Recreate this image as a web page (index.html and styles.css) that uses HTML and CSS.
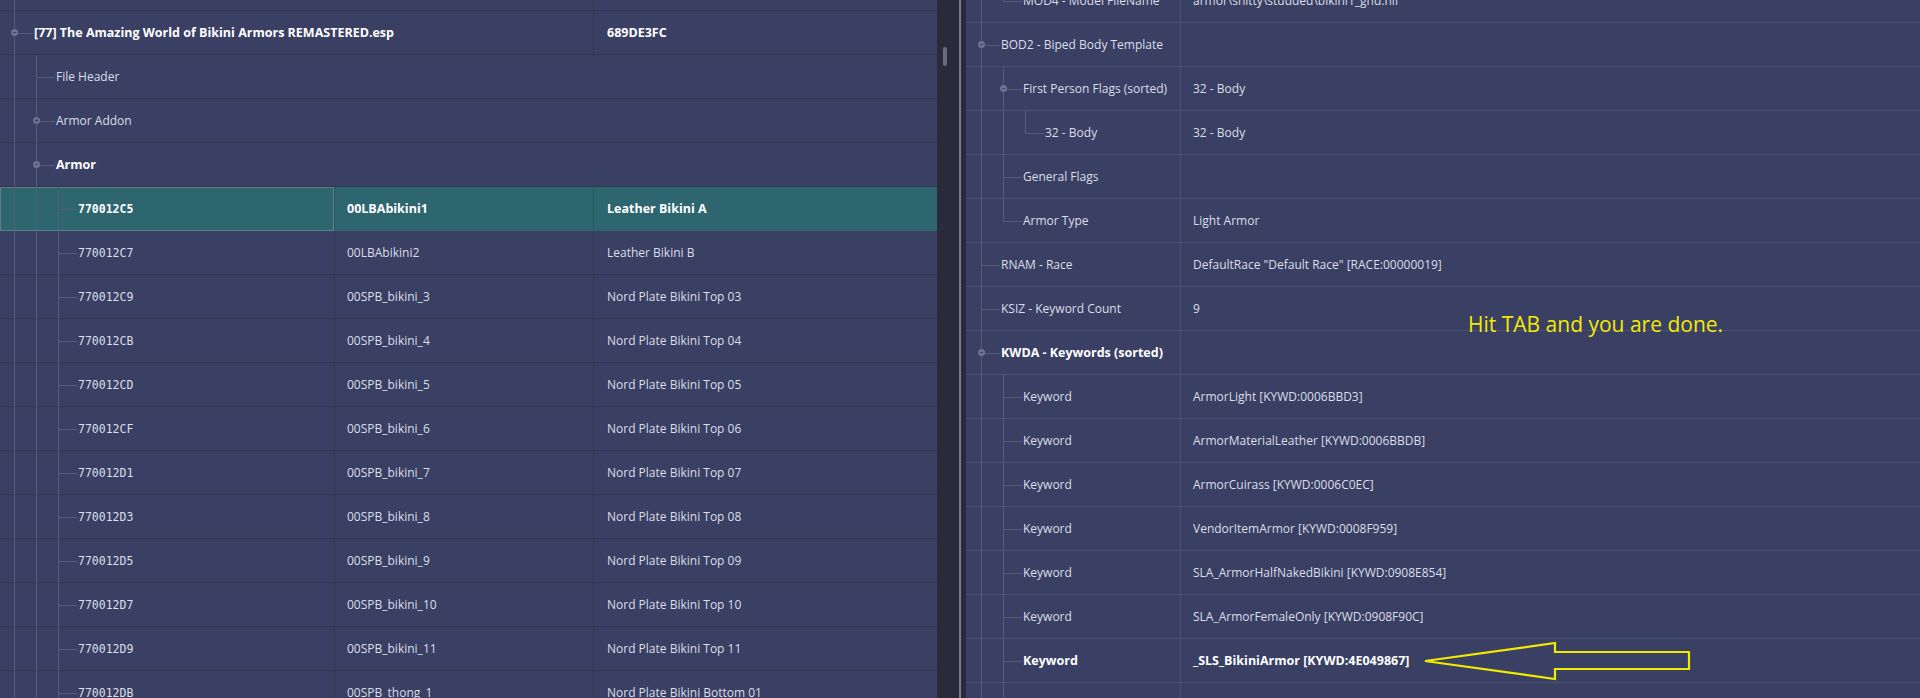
FILE: index.html
```html
<!DOCTYPE html>
<html lang="en">
<head>
  <meta charset="UTF-8">
  <title>xEdit - Bikini Armors</title>
  <link rel="stylesheet" href="styles.css">
</head>
<body>
  <div class="app">

    <!-- record list -->
    <div class="pane left">
      <div class="rows">
        <div class="row">
          <div class="c1 wide"><div class="tree"><span class="n tee"></span></div></div>
          <div class="c3"></div>
        </div>
        <div class="row">
          <div class="c1 wide">
            <div class="tree"><span class="n tee"><i class="tg"></i></span></div>
            <span class="label b">[77] The Amazing World of Bikini Armors REMASTERED.esp</span>
          </div>
          <div class="c3 b">689DE3FC</div>
        </div>
        <div class="row">
          <div class="c1 full">
            <div class="tree"><span class="g"></span><span class="n tee"></span></div>
            <span class="label">File Header</span>
          </div>
        </div>
        <div class="row">
          <div class="c1 full">
            <div class="tree"><span class="g"></span><span class="n tee"><i class="tg plus"></i></span></div>
            <span class="label">Armor Addon</span>
          </div>
        </div>
        <div class="row">
          <div class="c1 full">
            <div class="tree"><span class="g"></span><span class="n tee"><i class="tg"></i></span></div>
            <span class="label b">Armor</span>
          </div>
        </div>

        <div class="row sel">
          <div class="c1"><div class="tree"><span class="g"></span><span class="g"></span><span class="n tee"></span></div><span class="label mono b">770012C5</span></div>
          <div class="c2 b">00LBAbikini1</div>
          <div class="c3 b">Leather Bikini A</div>
        </div>
        <div class="row">
          <div class="c1"><div class="tree"><span class="g"></span><span class="g"></span><span class="n tee"></span></div><span class="label mono">770012C7</span></div>
          <div class="c2">00LBAbikini2</div>
          <div class="c3">Leather Bikini B</div>
        </div>
        <div class="row">
          <div class="c1"><div class="tree"><span class="g"></span><span class="g"></span><span class="n tee"></span></div><span class="label mono">770012C9</span></div>
          <div class="c2">00SPB_bikini_3</div>
          <div class="c3">Nord Plate Bikini Top 03</div>
        </div>
        <div class="row">
          <div class="c1"><div class="tree"><span class="g"></span><span class="g"></span><span class="n tee"></span></div><span class="label mono">770012CB</span></div>
          <div class="c2">00SPB_bikini_4</div>
          <div class="c3">Nord Plate Bikini Top 04</div>
        </div>
        <div class="row">
          <div class="c1"><div class="tree"><span class="g"></span><span class="g"></span><span class="n tee"></span></div><span class="label mono">770012CD</span></div>
          <div class="c2">00SPB_bikini_5</div>
          <div class="c3">Nord Plate Bikini Top 05</div>
        </div>
        <div class="row">
          <div class="c1"><div class="tree"><span class="g"></span><span class="g"></span><span class="n tee"></span></div><span class="label mono">770012CF</span></div>
          <div class="c2">00SPB_bikini_6</div>
          <div class="c3">Nord Plate Bikini Top 06</div>
        </div>
        <div class="row">
          <div class="c1"><div class="tree"><span class="g"></span><span class="g"></span><span class="n tee"></span></div><span class="label mono">770012D1</span></div>
          <div class="c2">00SPB_bikini_7</div>
          <div class="c3">Nord Plate Bikini Top 07</div>
        </div>
        <div class="row">
          <div class="c1"><div class="tree"><span class="g"></span><span class="g"></span><span class="n tee"></span></div><span class="label mono">770012D3</span></div>
          <div class="c2">00SPB_bikini_8</div>
          <div class="c3">Nord Plate Bikini Top 08</div>
        </div>
        <div class="row">
          <div class="c1"><div class="tree"><span class="g"></span><span class="g"></span><span class="n tee"></span></div><span class="label mono">770012D5</span></div>
          <div class="c2">00SPB_bikini_9</div>
          <div class="c3">Nord Plate Bikini Top 09</div>
        </div>
        <div class="row">
          <div class="c1"><div class="tree"><span class="g"></span><span class="g"></span><span class="n tee"></span></div><span class="label mono">770012D7</span></div>
          <div class="c2">00SPB_bikini_10</div>
          <div class="c3">Nord Plate Bikini Top 10</div>
        </div>
        <div class="row">
          <div class="c1"><div class="tree"><span class="g"></span><span class="g"></span><span class="n tee"></span></div><span class="label mono">770012D9</span></div>
          <div class="c2">00SPB_bikini_11</div>
          <div class="c3">Nord Plate Bikini Top 11</div>
        </div>
        <div class="row">
          <div class="c1"><div class="tree"><span class="g"></span><span class="g"></span><span class="n tee"></span></div><span class="label mono">770012DB</span></div>
          <div class="c2">00SPB_thong_1</div>
          <div class="c3">Nord Plate Bikini Bottom 01</div>
        </div>
      </div>
    </div>

    <div class="vscroll"><div class="thumb"></div></div>
    <div class="splitter"></div>

    <!-- record view -->
    <div class="pane right">
      <div class="rows">
        <div class="row">
          <div class="c1"><div class="tree"><span class="g"></span><span class="n end"></span></div><span class="label">MOD4 - Model FileName</span></div>
          <div class="c2">armor\shitty\studded\bikini1_gnd.nif</div>
        </div>
        <div class="row">
          <div class="c1"><div class="tree"><span class="n tee"><i class="tg"></i></span></div><span class="label">BOD2 - Biped Body Template</span></div>
          <div class="c2"></div>
        </div>
        <div class="row">
          <div class="c1"><div class="tree"><span class="g"></span><span class="n tee"><i class="tg"></i></span></div><span class="label">First Person Flags (sorted)</span></div>
          <div class="c2">32 - Body</div>
        </div>
        <div class="row">
          <div class="c1"><div class="tree"><span class="g"></span><span class="g"></span><span class="n end"></span></div><span class="label">32 - Body</span></div>
          <div class="c2">32 - Body</div>
        </div>
        <div class="row">
          <div class="c1"><div class="tree"><span class="g"></span><span class="n tee"></span></div><span class="label">General Flags</span></div>
          <div class="c2"></div>
        </div>
        <div class="row">
          <div class="c1"><div class="tree"><span class="g"></span><span class="n end"></span></div><span class="label">Armor Type</span></div>
          <div class="c2">Light Armor</div>
        </div>
        <div class="row">
          <div class="c1"><div class="tree"><span class="n tee"></span></div><span class="label">RNAM - Race</span></div>
          <div class="c2">DefaultRace "Default Race" [RACE:00000019]</div>
        </div>
        <div class="row">
          <div class="c1"><div class="tree"><span class="n tee"></span></div><span class="label">KSIZ - Keyword Count</span></div>
          <div class="c2">9</div>
        </div>
        <div class="row">
          <div class="c1"><div class="tree"><span class="n tee"><i class="tg"></i></span></div><span class="label b">KWDA - Keywords (sorted)</span></div>
          <div class="c2"></div>
        </div>
        <div class="row">
          <div class="c1"><div class="tree"><span class="g"></span><span class="n tee"></span></div><span class="label">Keyword</span></div>
          <div class="c2">ArmorLight [KYWD:0006BBD3]</div>
        </div>
        <div class="row">
          <div class="c1"><div class="tree"><span class="g"></span><span class="n tee"></span></div><span class="label">Keyword</span></div>
          <div class="c2">ArmorMaterialLeather [KYWD:0006BBDB]</div>
        </div>
        <div class="row">
          <div class="c1"><div class="tree"><span class="g"></span><span class="n tee"></span></div><span class="label">Keyword</span></div>
          <div class="c2">ArmorCuirass [KYWD:0006C0EC]</div>
        </div>
        <div class="row">
          <div class="c1"><div class="tree"><span class="g"></span><span class="n tee"></span></div><span class="label">Keyword</span></div>
          <div class="c2">VendorItemArmor [KYWD:0008F959]</div>
        </div>
        <div class="row">
          <div class="c1"><div class="tree"><span class="g"></span><span class="n tee"></span></div><span class="label">Keyword</span></div>
          <div class="c2">SLA_ArmorHalfNakedBikini [KYWD:0908E854]</div>
        </div>
        <div class="row">
          <div class="c1"><div class="tree"><span class="g"></span><span class="n tee"></span></div><span class="label">Keyword</span></div>
          <div class="c2">SLA_ArmorFemaleOnly [KYWD:0908F90C]</div>
        </div>
        <div class="row">
          <div class="c1"><div class="tree"><span class="g"></span><span class="n tee"></span></div><span class="label b">Keyword</span></div>
          <div class="c2 b">_SLS_BikiniArmor [KYWD:4E049867]</div>
        </div>
        <div class="row">
          <div class="c1"><div class="tree"><span class="g"></span><span class="g"></span></div></div>
          <div class="c2"></div>
        </div>
      </div>
    </div>
  </div>

  <!-- annotation drawn over the screenshot -->
  <div class="note">Hit TAB and you are done.</div>
  <svg class="arrow" width="276" height="48" viewBox="0 0 276 48">
    <polygon points="5,23 135,5 135,14 269,14 269,31 135,31 135,41" fill="none" stroke="#f4ea00" stroke-width="2.2" stroke-linejoin="miter"/>
  </svg>
</body>
</html>
```

FILE: styles.css
```css
body {
  margin: 0;
  background: #394063;
  color: #dcdee8;
  font-family: "Open Sans", "Noto Sans", sans-serif;
  font-size: 12px;
  overflow: hidden;
}
.app {
  display: flex;
  height: 698px;
  overflow: hidden;
}
.pane {
  background: #394063;
  overflow: hidden;
}
.left {
  width: 937px;
  flex: none;
}
.right {
  flex: 1;
}
.left .rows {
  margin-top: -33px;
}
.right .rows {
  margin-top: -21px;
}
.row {
  display: grid;
  height: 44px;
  background: linear-gradient(to top, #31374f 1px, transparent 1px);
}
.left .row {
  grid-template-columns: 334px 259px 1fr;
}
.right .row {
  grid-template-columns: 214px 1fr;
  background: linear-gradient(to top, #4a5174 1px, transparent 1px);
}
.c1 {
  display: flex;
  min-width: 0;
  padding-left: 4px;
  white-space: nowrap;
}
.right .c1 {
  padding-left: 5px;
}
.c1.wide {
  grid-column: 1 / 3;
}
.c1.full {
  grid-column: 1 / -1;
}
.c2, .c3 {
  display: flex;
  align-items: center;
  padding-left: 12px;
  border-left: 1px solid #31374f;
  white-space: nowrap;
  margin-bottom: 1px;
}
.right .c2 {
  border-left-color: #4a5174;
}
.c3 {
  padding-left: 13px;
}
.label {
  display: flex;
  align-items: center;
  margin-bottom: 1px;
}
.b {
  font-weight: 700;
  font-size: 12.5px;
  color: #ffffff;
}
.mono {
  font-family: "DejaVu Sans Mono", monospace;
  font-size: 11.5px;
}

/* tree guides */
.tree {
  display: flex;
  flex: none;
}
.g, .n {
  position: relative;
  flex: none;
}
.g {
  width: 22px;
}
.n {
  width: 30px;
}
.g::before, .n::before {
  content: "";
  position: absolute;
  left: 10px;
  top: 0;
  bottom: 0;
  width: 1px;
  background: #555c7b;
}
.n.end::before {
  bottom: 50%;
}
.n::after {
  content: "";
  position: absolute;
  left: 10px;
  right: 1px;
  top: 50%;
  height: 1px;
  background: #555c7b;
}
.tg {
  position: absolute;
  left: 7px;
  top: 50%;
  margin-top: -4px;
  width: 7px;
  height: 7px;
  border-radius: 50%;
  background: #6c7391;
  z-index: 1;
}
.tg::before {
  content: "";
  position: absolute;
  left: 2px;
  top: 3px;
  width: 3px;
  height: 1px;
  background: #3d4466;
}
.tg.plus::after {
  content: "";
  position: absolute;
  left: 3px;
  top: 2px;
  width: 1px;
  height: 3px;
  background: #3d4466;
}

/* selected record */
.row.sel {
  background: #2e6670;
}
.row.sel .c1 {
  outline: 1px solid #5e7f88;
  outline-offset: -1px;
}
.row.sel .c2, .row.sel .c3 {
  border-left-color: #2a5560;
}

/* scrollbar + splitter */
.vscroll {
  width: 22px;
  flex: none;
  background: #2b2a3b;
}
.thumb {
  width: 4px;
  height: 19px;
  margin: 47px 0 0 6px;
  border-radius: 2px;
  background: #6c6a80;
}
.splitter {
  width: 5px;
  flex: none;
  background: #2b2a3b;
  border-left: 2px solid #7c7b88;
}

/* annotation */
.note {
  position: absolute;
  left: 1468px;
  top: 310px;
  line-height: 28px;
  font-size: 21px;
  color: #f4ea00;
}
.arrow {
  position: absolute;
  left: 1420px;
  top: 638px;
}
```
